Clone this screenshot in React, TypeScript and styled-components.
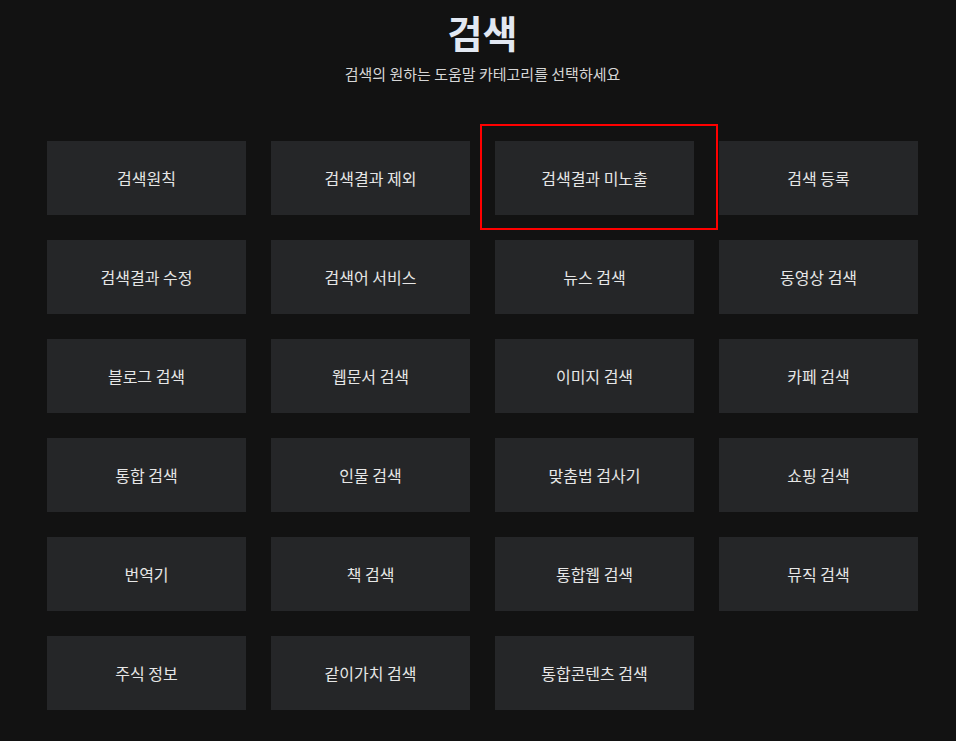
import React from 'react';
import styled, { createGlobalStyle } from 'styled-components';

const GlobalStyle = createGlobalStyle`
  html, body {
    margin: 0;
    padding: 0;
    background: #121212;
  }
  body {
    font-family: 'Noto Sans CJK KR', 'Noto Sans', sans-serif;
    color: #e4e4e4;
  }
`;

const Page = styled.div`
  width: 871px;
  margin-left: 47px;
  min-height: 741px;
  display: flex;
  flex-direction: column;
  align-items: center;
`;

const Header = styled.header`
  display: flex;
  flex-direction: column;
  align-items: center;
  padding-top: 7px;
  margin-bottom: 57px;
`;

const Title = styled.h1`
  margin: 0;
  font-size: 38px;
  font-weight: 700;
  line-height: 50px;
  color: #e2e8f2;
`;

const Subtitle = styled.p`
  margin: 7px 0 0;
  font-size: 15px;
  line-height: 20px;
  color: #d6d6d6;
`;

const Grid = styled.div`
  display: grid;
  grid-template-columns: repeat(4, 199px);
  grid-auto-rows: 74px;
  gap: 25px;
  width: 100%;
`;

const CardWrap = styled.div`
  position: relative;
`;

const Card = styled.button`
  width: 100%;
  height: 100%;
  border: none;
  padding: 0;
  background: #252628;
  color: #e6e6e6;
  font-family: inherit;
  font-size: 16px;
  display: flex;
  align-items: center;
  justify-content: center;
  cursor: pointer;
`;

const Highlight = styled.div`
  position: absolute;
  left: -15px;
  top: -17px;
  right: -24px;
  bottom: -15px;
  border: 2px solid #ff0000;
  pointer-events: none;
`;

const categories = [
  '검색원칙', '검색결과 제외', '검색결과 미노출', '검색 등록',
  '검색결과 수정', '검색어 서비스', '뉴스 검색', '동영상 검색',
  '블로그 검색', '웹문서 검색', '이미지 검색', '카페 검색',
  '통합 검색', '인물 검색', '맞춤법 검사기', '쇼핑 검색',
  '번역기', '책 검색', '통합웹 검색', '뮤직 검색',
  '주식 정보', '같이가치 검색', '통합콘텐츠 검색',
];

const App: React.FC = () => (
  <>
    <GlobalStyle />
    <Page>
      <Header>
        <Title>검색</Title>
        <Subtitle>검색의 원하는 도움말 카테고리를 선택하세요</Subtitle>
      </Header>
      <Grid>
        {categories.map((name) => (
          <CardWrap key={name}>
            <Card>{name}</Card>
            {name === '검색결과 미노출' && <Highlight />}
          </CardWrap>
        ))}
      </Grid>
    </Page>
  </>
);

export default App;
